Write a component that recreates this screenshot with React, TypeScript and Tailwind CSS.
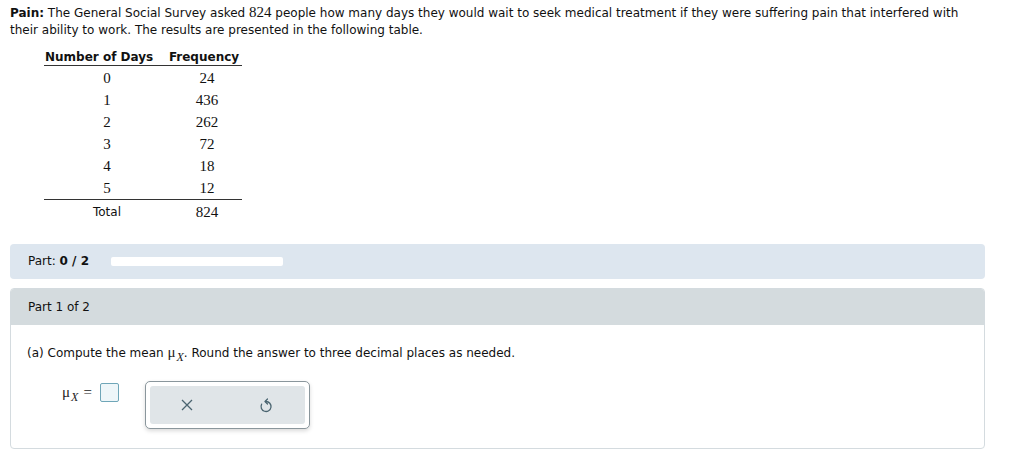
import React from "react";

const rows = [
  { days: "0", freq: "24" },
  { days: "1", freq: "436" },
  { days: "2", freq: "262" },
  { days: "3", freq: "72" },
  { days: "4", freq: "18" },
  { days: "5", freq: "12" },
];

const sans = { fontFamily: '"DejaVu Sans", Verdana, sans-serif' };
const serif = "font-['Liberation_Serif',serif]";

const MuX = () => (
  <span className={`${serif} text-[15px] text-[#222] inline-flex items-baseline`}>
    μ<span className="italic text-[12px] relative top-[4px] ml-[1px]">X</span>
  </span>
);

export default function App() {
  return (
    <div className="w-[1024px] h-[468px] bg-white text-[#111] text-[12px] leading-[17px] overflow-hidden" style={sans}>
      <div className="pl-[10px] pr-[50px] pt-[5px]">
        <p>
          <b>Pain:</b> The General Social Survey asked <span className={`${serif} text-[15px] leading-[15px]`}>824</span> people how many
          days they would wait to seek medical treatment if they were suffering pain that interfered with their ability
          to work. The results are presented in the following table.
        </p>
      </div>

      {/* table */}
      <div className="ml-[44px] mt-[11px] w-[198px]">
        <div className="flex border-b border-[#333] leading-[14px] pb-[1px] font-bold">
          <div className="w-[122px] pl-[1px]">Number of Days</div>
          <div className="flex-1 text-center">Frequency</div>
        </div>
        <div className={`${serif} text-[15px] border-b border-[#333] pt-[1px]`}>
          {rows.map((r) => (
            <div key={r.days} className="flex h-[22px] items-center">
              <div className="w-[126px] text-center">{r.days}</div>
              <div className="flex-1 text-center pl-[2px]">{r.freq}</div>
            </div>
          ))}
        </div>
        <div className="flex h-[24px] items-center">
          <div className="w-[126px] text-center">Total</div>
          <div className={`flex-1 text-center pl-[2px] ${serif} text-[15px]`}>824</div>
        </div>
      </div>

      {/* part progress */}
      <div className="mx-[10px] w-[975px] mt-[20px] h-[35px] rounded-[4px] bg-[#dde6ef] flex items-center pl-[18px]">
        <span className="w-[83px]">
          Part: <b>0 / 2</b>
        </span>
        <div className="w-[172px] h-[9px] rounded-[2px] bg-white" />
      </div>

      {/* part 1 panel */}
      <div className="mx-[10px] w-[975px] mt-[9px] h-[161px] rounded-[4px] border border-[#d4dbdf] overflow-hidden">
        <div className="h-[36px] bg-[#d4dbde] flex items-center pl-[17px]">Part 1 of 2</div>
        <div className="pl-[16px] pt-[19px]">
          <p className="flex items-baseline h-[17px]">
            (a) Compute the mean&nbsp;<MuX />. Round the answer to three decimal places as needed.
          </p>
          <div className="flex items-start mt-[20px]">
            <div className="ml-[35px] flex items-center w-[83px] mt-[2px]">
              <MuX />
              <span className={`${serif} text-[15px] ml-[5px] text-[#222]`}>=</span>
              <div className="ml-[8px] w-[19px] h-[19px] rounded-[2px] border border-[#6fa6b8] bg-[#eef6f9]" />
            </div>
            <div className="w-[165px] h-[48px] rounded-[5px] border border-[#8a969c] bg-white p-[4px] shadow-[0_2px_4px_rgba(0,0,0,0.15)]">
              <div className="h-full rounded-[3px] bg-[#e0e5e8] flex items-center">
                <svg className="ml-[31px]" width="12" height="12" viewBox="0 0 12 12" fill="none" stroke="#4a6470" strokeWidth="1.3">
                  <path d="M1 1 L11 11 M11 1 L1 11" />
                </svg>
                <svg className="ml-[66px]" width="14" height="16" viewBox="0 0 14 16" fill="none" stroke="#4a6470" strokeWidth="1.3" strokeLinecap="round" strokeLinejoin="round">
                  <path d="M6.5 4.5 L7 4.5 A5 5 0 1 1 2.6 7.2" />
                  <path d="M8.5 2 L6 4.5 L8.5 7" />
                </svg>
              </div>
            </div>
          </div>
        </div>
      </div>
    </div>
  );
}
